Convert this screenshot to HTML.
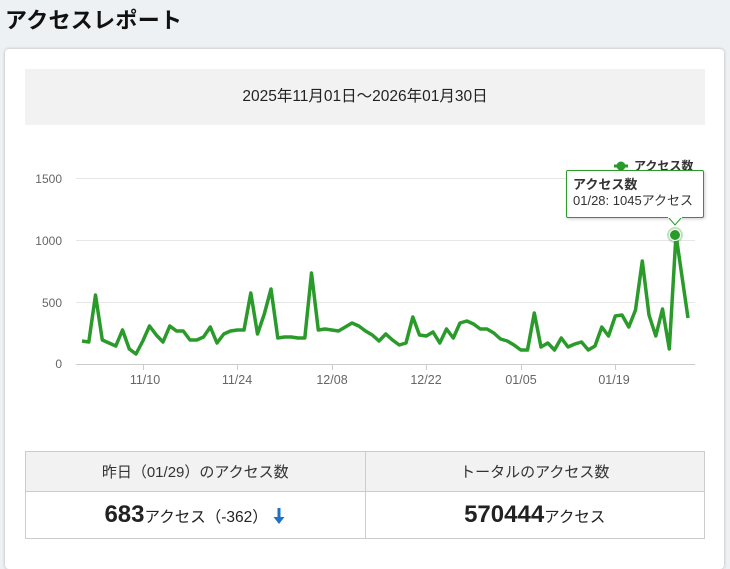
<!DOCTYPE html>
<html><head><meta charset="utf-8"><style>
*{margin:0;padding:0;box-sizing:border-box}
body{width:730px;height:543px;overflow:hidden;background:#eef1f4;font-family:"Liberation Sans","Noto Sans CJK JP",sans-serif;color:#222;position:relative}
h1{position:absolute;left:5px;top:3px;font-size:22px;font-weight:bold;color:#111;letter-spacing:0.3px}
.card{position:absolute;left:5px;top:49px;width:719px;height:520px;background:#fff;border-radius:4px;box-shadow:0 0 3px rgba(0,0,0,.25)}
.date{position:absolute;left:25px;top:69px;width:680px;height:56px;background:#f2f2f2;text-align:center;line-height:56px;font-size:15.5px;color:#222}
svg{position:absolute;left:0;top:0}
table{position:absolute;left:25px;top:451px;width:680px;border-collapse:collapse}
td{border:1px solid #ccc;text-align:center;width:50%}
.h td{background:#f2f2f2;height:40px;font-size:15px;color:#333}
.v td{height:47px;font-size:15.5px;color:#222}
.v b{font-size:24px}
.tip{position:absolute;left:566px;top:170px;width:138px;height:48px;background:#fff;border:1px solid #2a9b2a;border-radius:2px;padding:6px 0 0 6px;font-size:13px;line-height:16px;color:#333;box-shadow:1px 1px 3px rgba(0,0,0,.2);white-space:nowrap}
</style></head><body>
<h1>アクセスレポート</h1>
<div class="card"></div>
<div class="date">2025年11月01日～2026年01月30日</div>
<svg width="730" height="543">
<g stroke="#e6e6e6" stroke-width="1">
<line x1="76" y1="178.5" x2="695" y2="178.5"/><line x1="76" y1="240.5" x2="695" y2="240.5"/><line x1="76" y1="302.5" x2="695" y2="302.5"/><line x1="76" y1="364.5" x2="695" y2="364.5" stroke="#ccc"/>
</g>
<g font-size="12" fill="#666" text-anchor="end" font-family="Liberation Sans,sans-serif">
<text x="62" y="183">1500</text><text x="62" y="245">1000</text><text x="62" y="307">500</text><text x="62" y="368">0</text>
</g>
<g font-size="12.5" fill="#666" text-anchor="middle" font-family="Liberation Sans,sans-serif">
<text x="145" y="384">11/10</text><text x="237" y="384">11/24</text><text x="332" y="384">12/08</text><text x="426" y="384">12/22</text><text x="521" y="384">01/05</text><text x="614" y="384">01/19</text>
</g>
<g stroke="#ccc"><line x1="143.5" y1="364" x2="143.5" y2="370"/><line x1="237.5" y1="364" x2="237.5" y2="370"/><line x1="332.5" y1="364" x2="332.5" y2="370"/><line x1="426.5" y1="364" x2="426.5" y2="370"/><line x1="521.5" y1="364" x2="521.5" y2="370"/><line x1="615.5" y1="364" x2="615.5" y2="370"/></g>
<polyline id="ln" fill="none" stroke="#2a9b2a" stroke-width="3.5" stroke-linejoin="round" points=""/>
<circle cx="675" cy="235" r="8" fill="#2a9b2a" fill-opacity="0.3"/>
<circle cx="675" cy="235" r="5.5" fill="#2a9b2a" stroke="#fff" stroke-width="1"/>
<line x1="614" y1="166" x2="628" y2="166" stroke="#2a9b2a" stroke-width="3"/><circle cx="621" cy="166" r="4.5" fill="#2a9b2a"/>
<text x="634" y="170" font-size="12" font-weight="bold" fill="#333">アクセス数</text>
</svg>
<div class="tip"><b>アクセス数</b><br>01/28: 1045アクセス</div>
<svg width="730" height="543" style="pointer-events:none"><path d="M669 218 L675 225 L681 218" fill="#fff" stroke="#2a9b2a"/><rect x="668" y="216" width="14" height="2" fill="#fff"/></svg>
<table>
<tr class="h"><td>昨日（01/29）のアクセス数</td><td>トータルのアクセス数</td></tr>
<tr class="v"><td><b>683</b>アクセス（-362） <svg style="position:static;vertical-align:-3px" width="14" height="18"><path d="M7 1 V15" stroke="#1a73c8" stroke-width="3"/><path d="M1.5 10 L7 17 L12.5 10 Z" fill="#1a73c8"/></svg></td><td><b>570444</b>アクセス</td></tr>
</table>
<script>
var y=[341,342,295,340,343,346,330,349,354,341,326,335,342,326,331,331,340,340,337,327,343,334,331,330,330,293,334,314,289,338,337,337,338,338,273,330,329,330,331,327,323,326,331,335,341,334,340,345,343,317,335,336,332,343,329,338,323,321,324,329,329,333,339,341,345,350,350,313,347,343,350,338,347,344,342,350,346,327,336,316,315,327,310,261,315,336,309,349,235,318];
var p=[];for(var i=0;i<y.length;i++){var x=82+i*6.75;if(i==89)x=688;p.push(x.toFixed(1)+","+y[i]);}
document.getElementById("ln").setAttribute("points",p.join(" "));
</script>
</body></html>
